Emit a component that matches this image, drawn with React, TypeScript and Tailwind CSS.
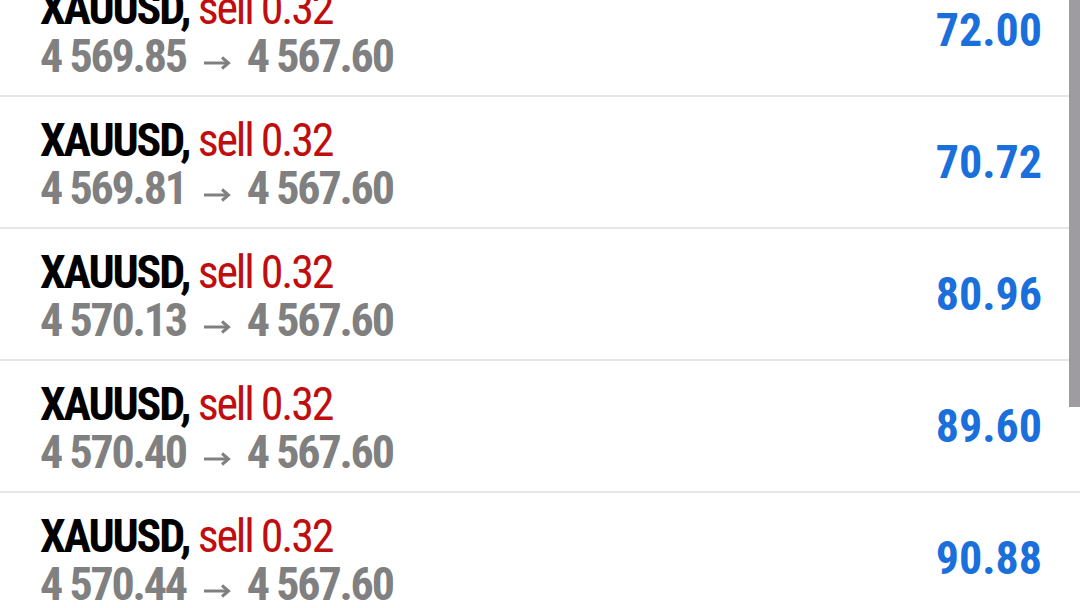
const rows = [
  { open: '4 569.85', profit: '72.00' },
  { open: '4 569.81', profit: '70.72' },
  { open: '4 570.13', profit: '80.96' },
  { open: '4 570.40', profit: '89.60' },
  { open: '4 570.44', profit: '90.88' },
]

function Arrow() {
  return (
    <svg width="28" height="18" viewBox="0 0 28 18" className="inline-block align-baseline ml-[17px] mr-[16px]">
      <path d="M1 9H25" stroke="#808080" strokeWidth="3" fill="none" />
      <path d="M19 3.5L25.5 9L19 14.5" stroke="#808080" strokeWidth="3" fill="none" strokeLinejoin="miter" />
    </svg>
  )
}

function TradeRow({ open, profit }: { open: string; profit: string }) {
  return (
    <div className="h-[132px] flex items-center justify-between pl-[40px] pr-[38px] border-b-2 border-[#e6e6e6]">
      <div className="flex flex-col pt-[3px] tracking-[-2.2px]">
        <div className="text-[46px] leading-[48px] whitespace-nowrap">
          <span className="font-bold text-black">XAUUSD,</span>
          <span className="text-[#c00d0d]"> sell 0.32</span>
        </div>
        <div className="text-[46px] leading-[48px] font-bold text-[#808080] whitespace-nowrap">
          {open}
          <Arrow />
          4 567.60
        </div>
      </div>
      <div className="text-[46px] font-bold text-[#1b6fdb]">{profit}</div>
    </div>
  )
}

export default function App() {
  return (
    <div
      className="relative w-[1080px] h-[608px] overflow-hidden bg-white font-stretch-condensed"
      style={{ fontFamily: 'Roboto, "Liberation Sans", sans-serif' }}
    >
      <div className="-mt-[35px]">
        {rows.map((r, i) => (
          <TradeRow key={i} open={r.open} profit={r.profit} />
        ))}
      </div>
      <div className="absolute top-0 right-0 w-[11px] h-[407px] bg-[#9e9ca0]" />
    </div>
  )
}
